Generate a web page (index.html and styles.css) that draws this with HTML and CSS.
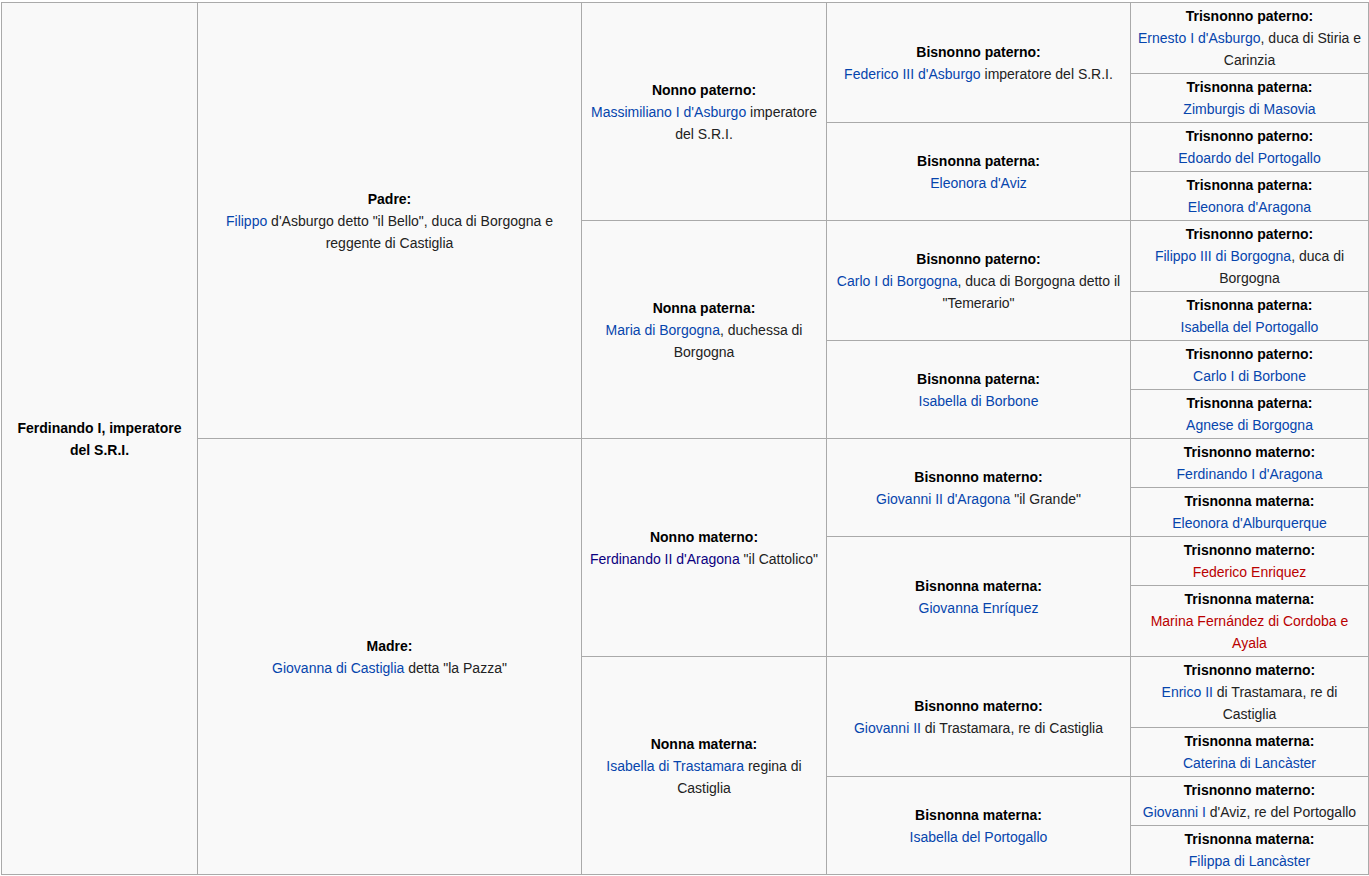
FILE: index.html
```html
<!DOCTYPE html>
<html lang="it">
<head>
<meta charset="utf-8">
<title>Ascendenza</title>
<link rel="stylesheet" href="styles.css">
</head>
<body>
<table class="tree">
<colgroup>
<col class="c1"><col class="c2"><col class="c3"><col class="c4"><col class="c5">
</colgroup>
<tbody>
<tr>
<td rowspan="16"><b>Ferdinando I, imperatore del S.R.I.</b></td>
<td rowspan="8"><b>Padre:</b><br><a href="#">Filippo</a> d'Asburgo detto "il Bello", duca di Borgogna e reggente di Castiglia</td>
<td rowspan="4"><b>Nonno paterno:</b><br><a href="#">Massimiliano I d'Asburgo</a> imperatore del S.R.I.</td>
<td rowspan="2"><b>Bisnonno paterno:</b><br><a href="#">Federico III d'Asburgo</a> imperatore del S.R.I.</td>
<td><b>Trisnonno paterno:</b><br><a href="#">Ernesto I d'Asburgo</a>, duca di Stiria e Carinzia</td>
</tr>
<tr>
<td><b>Trisnonna paterna:</b><br><a href="#">Zimburgis di Masovia</a></td>
</tr>
<tr>
<td rowspan="2"><b>Bisnonna paterna:</b><br><a href="#">Eleonora d'Aviz</a></td>
<td><b>Trisnonno paterno:</b><br><a href="#">Edoardo del Portogallo</a></td>
</tr>
<tr>
<td><b>Trisnonna paterna:</b><br><a href="#">Eleonora d'Aragona</a></td>
</tr>
<tr>
<td rowspan="4"><b>Nonna paterna:</b><br><a href="#">Maria di Borgogna</a>, duchessa di Borgogna</td>
<td rowspan="2"><b>Bisnonno paterno:</b><br><a href="#">Carlo I di Borgogna</a>, duca di Borgogna detto il "Temerario"</td>
<td><b>Trisnonno paterno:</b><br><a href="#">Filippo III di Borgogna</a>, duca di Borgogna</td>
</tr>
<tr>
<td><b>Trisnonna paterna:</b><br><a href="#">Isabella del Portogallo</a></td>
</tr>
<tr>
<td rowspan="2"><b>Bisnonna paterna:</b><br><a href="#">Isabella di Borbone</a></td>
<td><b>Trisnonno paterno:</b><br><a href="#">Carlo I di Borbone</a></td>
</tr>
<tr>
<td><b>Trisnonna paterna:</b><br><a href="#">Agnese di Borgogna</a></td>
</tr>
<tr>
<td rowspan="8"><b>Madre:</b><br><a href="#">Giovanna di Castiglia</a> detta "la Pazza"</td>
<td rowspan="4"><b>Nonno materno:</b><br><a href="#" class="visited">Ferdinando II d'Aragona</a> "il Cattolico"</td>
<td rowspan="2"><b>Bisnonno materno:</b><br><a href="#">Giovanni II d'Aragona</a> "il Grande"</td>
<td><b>Trisnonno materno:</b><br><a href="#">Ferdinando I d'Aragona</a></td>
</tr>
<tr>
<td><b>Trisnonna materna:</b><br><a href="#">Eleonora d'Alburquerque</a></td>
</tr>
<tr>
<td rowspan="2"><b>Bisnonna materna:</b><br><a href="#">Giovanna Enríquez</a></td>
<td><b>Trisnonno materno:</b><br><a href="#" class="new">Federico Enriquez</a></td>
</tr>
<tr>
<td><b>Trisnonna materna:</b><br><a href="#" class="new">Marina Fernández di Cordoba e Ayala</a></td>
</tr>
<tr>
<td rowspan="4"><b>Nonna materna:</b><br><a href="#">Isabella di Trastamara</a> regina di Castiglia</td>
<td rowspan="2"><b>Bisnonno materno:</b><br><a href="#">Giovanni II</a> di Trastamara, re di Castiglia</td>
<td><b>Trisnonno materno:</b><br><a href="#">Enrico II</a> di Trastamara, re di Castiglia</td>
</tr>
<tr>
<td><b>Trisnonna materna:</b><br><a href="#">Caterina di Lancàster</a></td>
</tr>
<tr>
<td rowspan="2"><b>Bisnonna materna:</b><br><a href="#">Isabella del Portogallo</a></td>
<td><b>Trisnonno materno:</b><br><a href="#">Giovanni I</a> d'Aviz, re del Portogallo</td>
</tr>
<tr>
<td><b>Trisnonna materna:</b><br><a href="#">Filippa di Lancàster</a></td>
</tr>
</tbody>
</table>
</body>
</html>
```

FILE: styles.css
```css
html, body {
  margin: 0;
  padding: 0;
  background: #ffffff;
}

body {
  padding: 2px 0 0 1px;
  font-family: "Liberation Sans", Arial, Helvetica, sans-serif;
  font-size: 14px;
  line-height: 22px;
  color: #222222;
}

.tree {
  width: 1368px;
  table-layout: fixed;
  border-collapse: collapse;
  background: #f9f9f9;
  color: #222222;
  border: 1px solid #aaaaaa;
}

.c1 { width: 196px; }
.c2 { width: 384px; }
.c3 { width: 245px; }
.c4 { width: 304px; }
.c5 { width: 238px; }

.tree td {
  border: 1px solid #aaaaaa;
  padding: 2px 5.6px;
  text-align: center;
  vertical-align: middle;
}

.tree b {
  font-weight: bold;
  color: #000000;
}

.tree a {
  color: #0645ad;
  text-decoration: none;
}

.tree a.visited {
  color: #0b0080;
}

.tree a.new {
  color: #ba0000;
}
```
